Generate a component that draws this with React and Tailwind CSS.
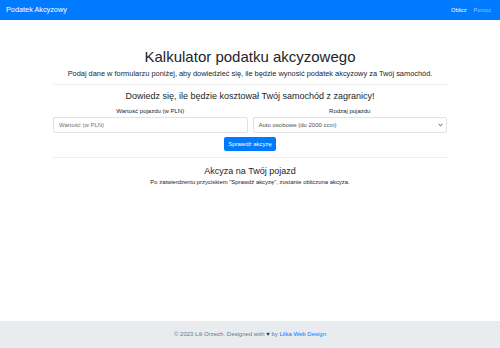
export default function App() {
  return (
    <div className="flex min-h-[348px] flex-col bg-white" style={{ fontFamily: '"Liberation Sans", Arial, sans-serif' }}>
      <nav className="flex h-[20px] items-center justify-between bg-[#007bff] pl-[6px] pr-[9px]">
        <span className="text-[7.3px] text-white">Podatek Akcyzowy</span>
        <div className="flex items-center gap-[7px] text-[5.6px]">
          <span className="text-white">Oblicz</span>
          <span className="text-[#9cc9ff]">Pomoc</span>
        </div>
      </nav>
      <main className="mx-auto flex w-[394px] flex-col items-center pt-[28px] text-[#212529]">
        <h1 className="text-[15px] leading-[18px]">Kalkulator podatku akcyzowego</h1>
        <p className="mt-[3px] text-[7.4px] leading-[9px]">Podaj dane w formularzu poniżej, aby dowiedzieć się, ile będzie wynosić podatek akcyzowy za Twój samochód.</p>
        <hr className="mt-[6px] w-full border-t border-[#eeeeee]" />
        <h2 className="mt-[6px] text-[9px] leading-[11px]">Dowiedz się, ile będzie kosztował Twój samochód z zagranicy!</h2>
        <div className="mt-[5px] grid w-full grid-cols-2 gap-[5px]">
          <div className="flex flex-col items-center">
            <label className="text-[6px] leading-[8px]">Wartość pojazdu (w PLN)</label>
            <div className="mt-[2px] flex h-[16px] w-full items-center rounded-[2px] border border-[#dfe3e7] px-[5px] text-[6px] text-[#6c757d]">Wartość (w PLN)</div>
          </div>
          <div className="flex flex-col items-center">
            <label className="text-[6px] leading-[8px]">Rodzaj pojazdu</label>
            <div className="mt-[2px] flex h-[16px] w-full items-center justify-between rounded-[2px] border border-[#dfe3e7] pl-[5px] pr-[3px] text-[6px] text-[#495057]">
              <span>Auto osobowe (do 2000 ccm)</span>
              <svg width="5" height="4" viewBox="0 0 5 4"><path d="M0.7 1 L2.5 2.8 L4.3 1" fill="none" stroke="#343a40" strokeWidth="0.9" /></svg>
            </div>
          </div>
        </div>
        <button className="mt-[4px] flex h-[14px] w-[52px] items-center justify-center rounded-[2px] bg-[#007bff] text-[6px] text-white">Sprawdź akcyzę</button>
        <hr className="mt-[6px] w-full border-t border-[#eeeeee]" />
        <h2 className="mt-[8px] text-[9px] leading-[11px]">Akcyza na Twój pojazd</h2>
        <p className="mt-[1px] text-[5.9px] leading-[8px]">Po zatwierdzeniu przyciskiem "Sprawdź akcyzę", zostanie obliczona akcyza.</p>
      </main>
      <footer className="mt-auto flex h-[27px] items-center justify-center bg-[#e9ecef] text-[6px] text-[#6c757d]">
        <span>© 2023 Lili Orzech. Designed with <span className="text-[#343a40]">♥</span> by <span className="text-[#007bff]">Lilka Web Design</span></span>
      </footer>
    </div>
  );
}
